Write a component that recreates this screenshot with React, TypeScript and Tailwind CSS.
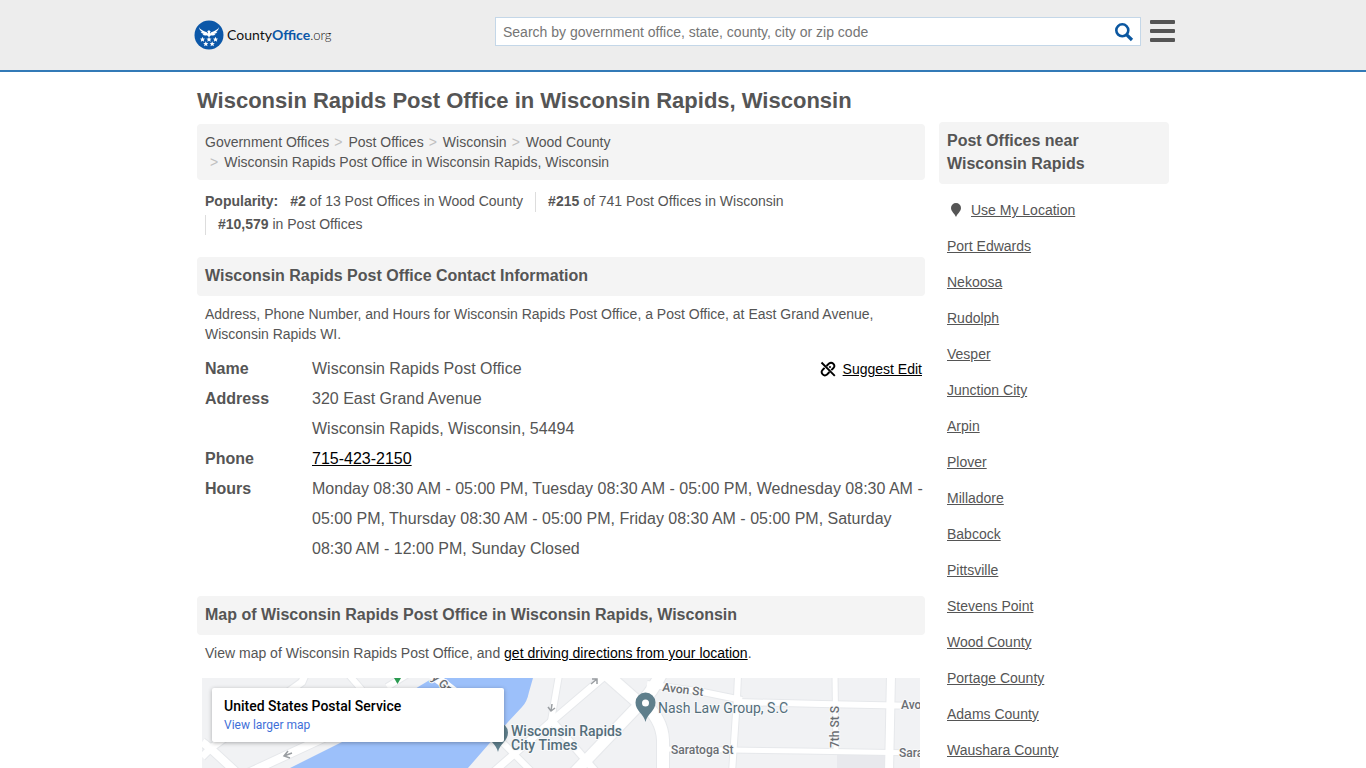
import React from "react";

const crumbs = [
  "Government Offices",
  "Post Offices",
  "Wisconsin",
  "Wood County",
  "Wisconsin Rapids Post Office in Wisconsin Rapids, Wisconsin",
];

const ranks = [
  { rank: "#2", text: "of 13 Post Offices in Wood County" },
  { rank: "#215", text: "of 741 Post Offices in Wisconsin" },
  { rank: "#10,579", text: "in Post Offices" },
];

const nearby = [
  "Port Edwards",
  "Nekoosa",
  "Rudolph",
  "Vesper",
  "Junction City",
  "Arpin",
  "Plover",
  "Milladore",
  "Babcock",
  "Pittsville",
  "Stevens Point",
  "Wood County",
  "Portage County",
  "Adams County",
  "Waushara County",
];

const roads = [
  { d: "M0 79 L9 70 L100 4 L103 -3", w: 7 },
  { d: "M0 64 L8 70 L34 94", w: 8 },
  { d: "M147 -3 L160 12", w: 6 },
  { d: "M185 9 L206 -4", w: 6 },
  { d: "M46 95 L128 57", w: 8 },
  { d: "M357 -3 L349 43", w: 6 },
  { d: "M288 97 L350 43 L405 -4", w: 7 },
  { d: "M350 43 L394 94", w: 7 },
  { d: "M294 58 L330 94", w: 6 },
  { d: "M404 -4 L438 26", w: 12 },
  { d: "M438 26 L372 95", w: 11 },
  { d: "M459 -4 Q450 14 440 24 Q460 40 461 62 L461 95", w: 12 },
  { d: "M445 6 L501 14 L540 22", w: 6 },
  { d: "M536 -3 L535 20 L530 95", w: 6 },
  { d: "M535 24 L620 26 L718 28", w: 6 },
  { d: "M461 71 L600 73 L718 75", w: 5 },
  { d: "M633 -3 L634 74", w: 5 },
  { d: "M689 -3 L687 95", w: 8 },
];

function Logo() {
  return (
    <svg viewBox="0 0 30 30" className="size-[30px] shrink-0" aria-hidden="true">
      <circle cx="15" cy="15" r="14.5" fill="#0b57a8" />
      <g fill="#fff">
        <path d="M4.800 7 Q7 10.500 12.800 12.200 L14 14 L12.500 15.500 Q9.500 15.800 8.500 14.200 L10 14 Q7.500 13.500 6.500 11.800 L8.200 12 Q5.200 10 4.800 7z" />
        <path d="M25.200 7 Q23 10.500 17.200 12.200 L16 14 L17.500 15.500 Q20.500 15.800 21.500 14.200 L20 14 Q22.500 13.500 23.500 11.800 L21.800 12 Q24.800 10 25.200 7z" />
        <path d="M13 11.300 L15 10.300 L16.800 11.500 L16 12 L17.200 15 L15 17.200 L12.800 15 L14 12z" />
        {[
          [8.5, 19.5],
          [15, 19.5],
          [21.5, 19.5],
          [11.8, 24],
          [18.2, 24],
        ].map(([x, y]) => (
          <path
            key={`${x}-${y}`}
            transform={`translate(${x} ${y}) scale(1.2)`}
            d="M0-2.300.600-.800 2.200-.700 1 .300 1.400 1.900 0 1-1.400 1.900-1 .300-2.200-.700-.600-.800z"
          />
        ))}
      </g>
    </svg>
  );
}

function MapPin({ x, y }: { x: number; y: number }) {
  return (
    <g transform={`translate(${x} ${y})`}>
      <path
        d="M0 29 C-1.5 21 -10 18 -10 9.500 A10 10 0 0 1 10 9.500 C10 18 1.500 21 0 29z"
        fill="#5f7f8c"
      />
      <circle cx="0" cy="10" r="3.500" fill="#fff" />
    </g>
  );
}

function StreetMap() {
  const halo = {
    stroke: "#f8f9fa",
    strokeWidth: 2,
    paintOrder: "stroke",
  } as React.CSSProperties;
  return (
    <svg
      viewBox="0 0 718 90"
      preserveAspectRatio="xMidYMin slice"
      className="block h-[90px] w-full"
      role="img"
      aria-label="Street map around the post office"
      fontFamily="Roboto, sans-serif"
      fontWeight="500"
    >
      <rect width="718" height="90" fill="#f1f2f4" />
      <rect x="635" y="75" width="50" height="15" fill="#e8e9ed" />
      <path d="M88 90 L140 64 L216 9 L231 0 H331 L327 14 Q325 24 320 29 L306 44 L266 90z" fill="#9cc0fa" />
      {roads.map((r) => (
        <path key={r.d} d={r.d} fill="none" stroke="#e6e8eb" strokeWidth={r.w + 2} />
      ))}
      {roads.map((r) => (
        <path key={r.d} d={r.d} fill="none" stroke="#fff" strokeWidth={r.w} />
      ))}
      <path d="M228 -5 L258 18" stroke="#fff" strokeWidth="9" />
      <path d="M192 0h7l-3.500 6z" fill="#2a9a50" />
      <g fill="none" stroke="#9a9ea2" strokeWidth="1.500">
        <path d="M90 75 L82 78 M86 73 L82 78 L88 80" />
        <path d="M350 26 L349 33 M346 29 L349 33 L353 30" />
        <path d="M389 6 L395 1 M390 1 H395 V6" />
      </g>
      <MapPin x={296} y={45} />
      <MapPin x={443.5} y={15} />
      <g fill="#6a6e73" fontSize="12" style={halo}>
        <text x="229" y="1" transform="rotate(40 229 1)">y Gr</text>
        <text x="460" y="13" transform="rotate(7 460 13)">Avon St</text>
        <text x="469" y="76">Saratoga St</text>
        <text x="699" y="31">Avo</text>
        <text x="697" y="79">Sara</text>
        <text x="637" y="70" transform="rotate(-90 637 70)">7th St S</text>
      </g>
      <g fill="#546e7a" fontSize="14" style={halo}>
        <text x="456" y="35" fontWeight="400">Nash Law Group, S.C</text>
        <text x="309" y="58">Wisconsin Rapids</text>
        <text x="309" y="72">City Times</text>
      </g>
    </svg>
  );
}

function SectionHeading({ children }: { children: React.ReactNode }) {
  return (
    <h2 className="rounded bg-[#f4f4f4] px-2 pt-[7px] pb-[9px] text-base leading-[23px] font-bold">
      {children}
    </h2>
  );
}

export default function App() {
  return (
    <div className="min-h-screen bg-white font-['Liberation_Sans',Arial,sans-serif] text-sm text-[#555]">
      <header className="border-b-2 border-[#337ab7] bg-[#ededed]">
        <div className="mx-auto flex h-[70px] max-w-[984px] items-start justify-between pl-[3px]">
          <a href="#" className="mt-5 flex items-center gap-[3px] font-['Lato',sans-serif] text-sm leading-none text-[#111]">
            <Logo />
            <span>
              County<b className="text-[#0b57a8]">Office</b>
              <span className="text-[13px] font-light">.org</span>
            </span>
          </a>
          <div className="mt-[17px] flex items-start">
            <form className="flex h-[29px] w-[646px] items-center border border-[#c4d7e8] bg-white" onSubmit={(e) => e.preventDefault()}>
              <input
                type="text"
                aria-label="Search"
                placeholder="Search by government office, state, county, city or zip code"
                className="h-full min-w-0 flex-1 px-[7px] text-sm outline-none placeholder:text-[#757575]"
              />
              <button type="submit" aria-label="Submit search" className="mr-[6px]">
                <svg viewBox="0 0 20 20" className="size-5" fill="none" stroke="#0b57a0" aria-hidden="true">
                  <circle cx="8.300" cy="8.300" r="6" strokeWidth="2.600" />
                  <path d="M12.800 12.800 L18 18" strokeWidth="3.200" />
                </svg>
              </button>
            </form>
            <button type="button" aria-label="Menu" className="mt-[3px] ml-[9px] flex w-[25px] flex-col gap-[5px]">
              <span className="h-1 rounded-[1px] bg-[#555]" />
              <span className="h-1 rounded-[1px] bg-[#555]" />
              <span className="h-1 rounded-[1px] bg-[#555]" />
            </button>
          </div>
        </div>
      </header>

      <div className="mx-auto flex max-w-[972px] items-start gap-[14px]">
        <main className="min-w-0 flex-1">
          <h1 className="pt-3 text-[22px] leading-[33px] font-bold">
            Wisconsin Rapids Post Office in Wisconsin Rapids, Wisconsin
          </h1>
          <nav aria-label="Breadcrumb" className="mt-[7px] rounded bg-[#f4f4f4] p-2">
            <ol className="flex flex-wrap leading-5">
              {crumbs.map((c, i) => (
                <li key={c}>
                  {i > 0 && <span className="pr-[6px] pl-[5px] text-[#c0c0c0]">&gt;</span>}
                  <a href="#">{c}</a>
                </li>
              ))}
            </ol>
          </nav>
          <div className="mt-[10px] flex flex-wrap gap-x-3 px-2 leading-[23px]">
            <b>Popularity:</b>
            {ranks.map((r, i) => (
              <span key={r.rank} className={i > 0 ? "bg-[linear-gradient(#ddd,#ddd)] bg-[length:1px_20px] bg-[position:0_2px] bg-no-repeat pl-[13px]" : ""}>
                <b>{r.rank}</b> {r.text}
              </span>
            ))}
          </div>

          <section className="mt-[21px]">
            <SectionHeading>Wisconsin Rapids Post Office Contact Information</SectionHeading>
            <p className="mt-2 px-2 leading-5">
              Address, Phone Number, and Hours for Wisconsin Rapids Post Office, a Post Office, at East Grand
              Avenue, Wisconsin Rapids WI.
            </p>
            <dl className="mt-[10px] grid grid-cols-[107px_1fr] pl-2 text-base leading-[30px]">
              <dt className="font-bold">Name</dt>
              <dd className="flex items-center justify-between">
                <span>Wisconsin Rapids Post Office</span>
                <a href="#" className="mr-[3px] flex items-center gap-[7px] text-sm leading-[30px] text-black">
                  <svg viewBox="0 0 16 16" className="size-4" fill="none" stroke="currentColor" strokeWidth="1.900" aria-hidden="true">
                    <path d="M1.500 1.500 L14.800 14.800" />
                    <path d="M6.500 5 L9 2.500 C12 .2 16 4 13.500 7 L11.300 9.200" />
                    <path d="M4.600 6.800 L2.500 9 C0 12 4 16 7 13.500 L9.500 11" />
                    <path d="M9.300 6.700 L10.600 5.400" />
                  </svg>
                  <span className="underline">Suggest Edit</span>
                </a>
              </dd>
              <dt className="font-bold">Address</dt>
              <dd>
                320 East Grand Avenue
                <br />
                Wisconsin Rapids, Wisconsin, 54494
              </dd>
              <dt className="font-bold">Phone</dt>
              <dd>
                <a href="tel:7154232150" className="text-black underline">715-423-2150</a>
              </dd>
              <dt className="font-bold">Hours</dt>
              <dd>
                Monday 08:30 AM - 05:00 PM, Tuesday 08:30 AM - 05:00 PM, Wednesday 08:30 AM - 05:00 PM, Thursday
                08:30 AM - 05:00 PM, Friday 08:30 AM - 05:00 PM, Saturday 08:30 AM - 12:00 PM, Sunday Closed
              </dd>
            </dl>
          </section>

          <section className="mt-8">
            <SectionHeading>Map of Wisconsin Rapids Post Office in Wisconsin Rapids, Wisconsin</SectionHeading>
            <p className="mt-2 px-2 leading-5">
              View map of Wisconsin Rapids Post Office, and{" "}
              <a href="#" className="text-black underline">get driving directions from your location</a>.
            </p>
            <div className="relative mx-[5px] mt-[15px]">
              <StreetMap />
              <div className="absolute top-[10px] left-[10px] w-[292px] rounded-xs bg-white px-3 pt-[9px] pb-2 font-['Roboto',sans-serif] shadow-[0_1px_4px_rgba(0,0,0,0.3)]">
                <div className="text-sm leading-[19px] font-medium text-black">United States Postal Service</div>
                <a href="#" className="block text-xs leading-[18px] text-[#3f6fd8]">View larger map</a>
              </div>
            </div>
          </section>
        </main>

        <aside className="mt-[50px] w-[230px] shrink-0">
          <SectionHeading>
            Post Offices near
            <br />
            Wisconsin Rapids
          </SectionHeading>
          <ul className="mt-2 px-2 leading-9">
            <li className="flex items-center">
              <svg viewBox="0 0 10 14" className="mr-[10px] ml-1 h-[14px] w-[10px]" fill="currentColor" aria-hidden="true">
                <path d="M5 14 C4 11 0 8.500 0 5 A5 5 0 0 1 10 5 C10 8.500 6 11 5 14z" />
              </svg>
              <a href="#" className="underline">Use My Location</a>
            </li>
            {nearby.map((n) => (
              <li key={n}>
                <a href="#" className="underline">{n}</a>
              </li>
            ))}
          </ul>
        </aside>
      </div>
    </div>
  );
}
